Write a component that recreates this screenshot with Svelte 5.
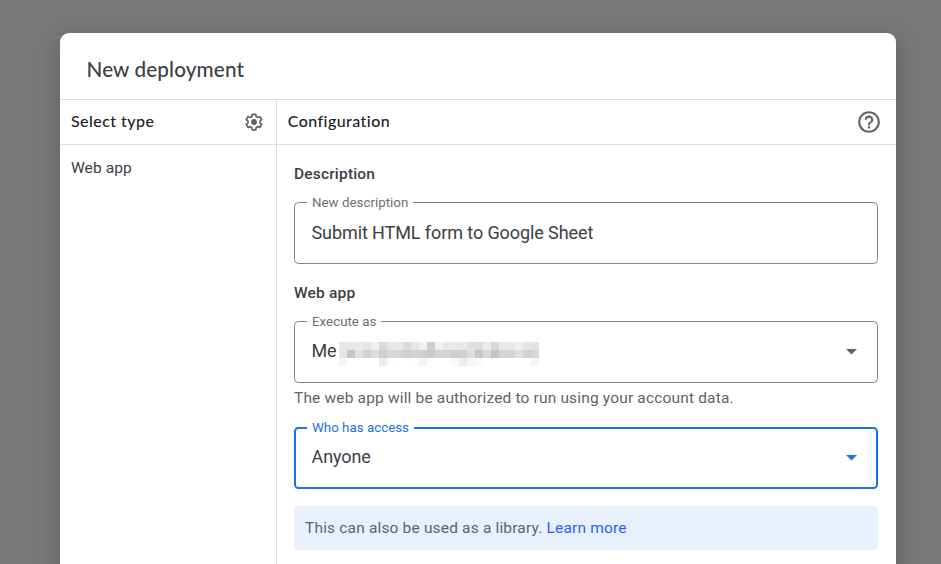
<script>
  const mosaic = [
    'e6e7e6 e7e7e7 eaeaea e3e6e4 f0f0f0 d8dad9 e9e8e9 e8e8e8 d9dada e5e8e7 f0f0f0 cfcfcf f2f2f2 e6eae8 e8eaea e8e8e8 e0e0e0 dddfde ebebeb d3d7d5 e9e9e9 e9e9e9 eeeeee e6e6e6 e2e2e2',
    'e4e5e4 c5c7c6 e2e2e2 cfd0cf dcdcdc cdd0cf d8d8d8 d5d5d5 cecfd0 d0d4d3 d0d0d0 cccaca d4d4d4 d4d4d4 cbcfcd cfd2d0 dedede c4c8c6 d7d9d8 c2c5c3 d4d3d3 d6d5d5 dfdfdf d0d2d1 d8d8d8',
    'f6f6f6 ffffff ffffff ffffff ffffff e8ecea fdfdfd ffffff ffffff fdfdfd f5f5f5 ffffff ffffff ffffff f8faf9 ededed f5f5f5 fbfbfb ffffff ffffff ffffff ffffff ffffff ffffff f6f8f7',
  ].flatMap((row) => row.split(' '));
</script>

<div class="screen">
  <section class="dialog">
    <header><h1>New deployment</h1></header>
    <div class="columns">
      <aside>
        <div class="bar">
          <h2>Select type</h2>
          <svg width="20" height="20" viewBox="0 0 20 20">
            <path d="M8.300 2.300h3.400l.5 2.300 1.500.9 2.300-.8 1.700 3-1.700 1.500v1.700l1.700 1.500-1.700 3-2.300-.8-1.500.9-.5 2.300H8.300l-.5-2.300-1.500-.9-2.300.8-1.700-3L4 10.900V9.200L2.300 7.700l1.700-3 2.300.8 1.500-.9z" fill="none" stroke="#5f6368" stroke-width="1.700" stroke-linejoin="round" />
            <circle cx="10" cy="10" r="2.900" fill="#5f6368" />
          </svg>
        </div>
        <p class="type">Web app</p>
      </aside>
      <main>
        <div class="bar">
          <h2>Configuration</h2>
          <svg width="26" height="26" viewBox="0 0 24 24" fill="#5f6368">
            <path d="M11 18h2v-2h-2v2zm1-16C6.48 2 2 6.48 2 12s4.480 10 10 10 10-4.480 10-10S17.520 2 12 2zm0 18c-4.410 0-8-3.590-8-8s3.590-8 8-8 8 3.590 8 8-3.590 8-8 8zm0-14c-2.210 0-4 1.790-4 4h2c0-1.100.9-2 2-2s2 .9 2 2c0 2-3 1.750-3 5h2c0-2.250 3-2.500 3-5 0-2.210-1.790-4-4-4z" />
          </svg>
        </div>
        <div class="form">
          <h3>Description</h3>
          <div class="field first">
            <span class="label">New description</span>
            <span class="value">Submit HTML form to Google Sheet</span>
          </div>
          <h3>Web app</h3>
          <div class="field">
            <span class="label">Execute as</span>
            <span class="value me">Me</span>
            <div class="mosaic">
              {#each mosaic as color}<i style="background:#{color}"></i>{/each}
            </div>
            <svg class="arrow" width="11" height="6" viewBox="0 0 11 6"><path d="M0 0h11L5.500 5.500z" /></svg>
          </div>
          <p class="hint">The web app will be authorized to run using your account data.</p>
          <div class="field active">
            <span class="label">Who has access</span>
            <span class="value">Anyone</span>
            <svg class="arrow" width="11" height="6" viewBox="0 0 11 6"><path d="M0 0h11L5.500 5.500z" /></svg>
          </div>
          <div class="note"><span>This can also be used as a library.</span><a href="#learn">Learn more</a></div>
        </div>
      </main>
    </div>
  </section>
</div>

<style>
  .screen {
    box-sizing: border-box;
    height: 564px;
    padding: 33px 45px 0 60px;
    overflow: hidden;
    background: #77787a;
    font-family: Roboto, sans-serif;
    color: #3c4043;
  }
  .dialog {
    display: flex;
    flex-direction: column;
    height: 600px;
    background: #fff;
    border-radius: 9px;
    box-shadow: 0 12px 17px 2px rgba(0, 0, 0, 0.1), 0 5px 24px 4px rgba(0, 0, 0, 0.08);
  }
  h1, h2, h3, p { margin: 0; white-space: nowrap; }
  header {
    box-sizing: border-box;
    height: 67px;
    padding: 21px 26.500px 0;
    border-bottom: 1px solid #dadce0;
  }
  h1 { font: 500 20.700px/30px "Google Sans", Lato, sans-serif; letter-spacing: 0.130px; }
  .columns { display: flex; flex: 1; }
  aside { box-sizing: border-box; width: 217px; border-right: 1px solid #dadce0; }
  main { flex: 1; }
  .bar {
    box-sizing: border-box;
    display: flex;
    align-items: center;
    justify-content: space-between;
    height: 45px;
    padding: 0 12.400px 0 11px;
    border-bottom: 1px solid #dadce0;
  }
  main .bar { padding: 0 13.700px 0 10.700px; }
  h2 { padding-bottom: 2px; font: 500 16px/24px "Google Sans", Lato, sans-serif; color: #202124; letter-spacing: 0.450px; }
  .type { padding: 13px 11px; font-size: 15.500px; line-height: 20px; letter-spacing: 0.100px; }
  .form { padding: 18px 18px 0 17px; }
  h3 { height: 22px; font-size: 15.500px; font-weight: 500; line-height: 22px; letter-spacing: 0.180px; }
  .field {
    position: relative;
    box-sizing: border-box;
    display: flex;
    align-items: center;
    height: 62px;
    margin-top: 17px;
    padding: 0 20px 0 16.500px;
    border: 1px solid #80868b;
    border-radius: 4.500px;
  }
  .field + h3 { margin-top: 18px; }
  .label {
    position: absolute;
    top: -8px;
    left: 12px;
    padding: 0 4.500px 0 5px;
    background: #fff;
    color: #6c7075;
    font-size: 13.350px;
    line-height: 16px;
    white-space: nowrap;
  }
  .value { padding-bottom: 2px; font-size: 18px; line-height: 24px; letter-spacing: -0.090px; white-space: nowrap; }
  .first .value { padding-bottom: 0; }
  .me { width: 25px; }
  .mosaic { display: grid; grid-template-columns: repeat(25, 8px); grid-auto-rows: 8px; margin: 3px 0 0 2.500px; }
  .arrow { margin-left: auto; fill: #5f6368; }
  .hint { height: 30px; margin-bottom: -3px; color: #5f6368; font-size: 15.500px; line-height: 30px; letter-spacing: 0.165px; }
  .active { padding: 0 19px 0 15.500px; border: 2px solid #1a73e8; }
  .active .label { top: -9px; left: 11px; color: #1a73e8; }
  .active .arrow { fill: #1a73e8; }
  .note {
    display: flex;
    align-items: center;
    gap: 4px;
    height: 44px;
    margin-top: 17px;
    padding-left: 11px;
    border-radius: 4.500px;
    background: #e8f0fe;
    color: #5f6368;
    font-size: 15.500px;
    letter-spacing: 0.170px;
    white-space: nowrap;
  }
  a { color: #2962ff; text-decoration: none; }
</style>
